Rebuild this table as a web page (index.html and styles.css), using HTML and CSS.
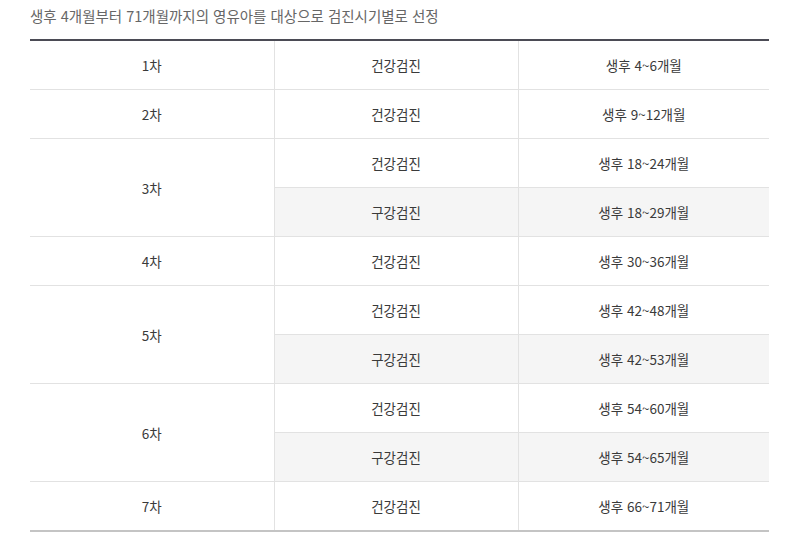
FILE: index.html
```html
<!DOCTYPE html>
<html lang="ko">
<head>
<meta charset="utf-8">
<link rel="stylesheet" href="styles.css">
</head>
<body>
<div class="wrap">
  <p class="desc">생후 4개월부터 71개월까지의 영유아를 대상으로 검진시기별로 선정</p>
  <table class="tbl">
    <colgroup><col class="c1"><col class="c2"><col class="c3"></colgroup>
    <tbody>
      <tr><td>1차</td><td>건강검진</td><td>생후 4~6개월</td></tr>
      <tr><td>2차</td><td>건강검진</td><td>생후 9~12개월</td></tr>
      <tr><td rowspan="2">3차</td><td>건강검진</td><td>생후 18~24개월</td></tr>
      <tr class="oral"><td>구강검진</td><td>생후 18~29개월</td></tr>
      <tr><td>4차</td><td>건강검진</td><td>생후 30~36개월</td></tr>
      <tr><td rowspan="2">5차</td><td>건강검진</td><td>생후 42~48개월</td></tr>
      <tr class="oral"><td>구강검진</td><td>생후 42~53개월</td></tr>
      <tr><td rowspan="2">6차</td><td>건강검진</td><td>생후 54~60개월</td></tr>
      <tr class="oral"><td>구강검진</td><td>생후 54~65개월</td></tr>
      <tr class="last"><td>7차</td><td>건강검진</td><td>생후 66~71개월</td></tr>
    </tbody>
  </table>
</div>
</body>
</html>
```
FILE: styles.css
```css
html, body { margin: 0; padding: 0; background: #fff; }
body { font-family: "Noto Sans CJK KR", "Noto Sans", sans-serif; color: #444; }
.wrap { padding: 6px 20px 0 30px; }
.desc { margin: 0 0 13px; font-size: 14.5px; line-height: 20px; color: #666; }
.tbl { width: 739px; border-collapse: collapse; table-layout: fixed; border-top: 2px solid #4b4b55; border-bottom: 2px solid #c4c4c4; }
.c1 { width: 244px; }
.c2 { width: 244px; }
.c3 { width: 251px; }
.tbl td { height: 48px; padding: 0; text-align: center; vertical-align: middle; font-size: 13.5px; color: #3a3a3a; border-bottom: 1px solid #e2e2e2; border-left: 1px solid #e2e2e2; }
.tbl tr td:first-child { border-left: 0; }
.tbl tr.oral td { background: #f5f5f5; border-left: 1px solid #e2e2e2; }
.tbl tr.last td { border-bottom: 0; }
```
